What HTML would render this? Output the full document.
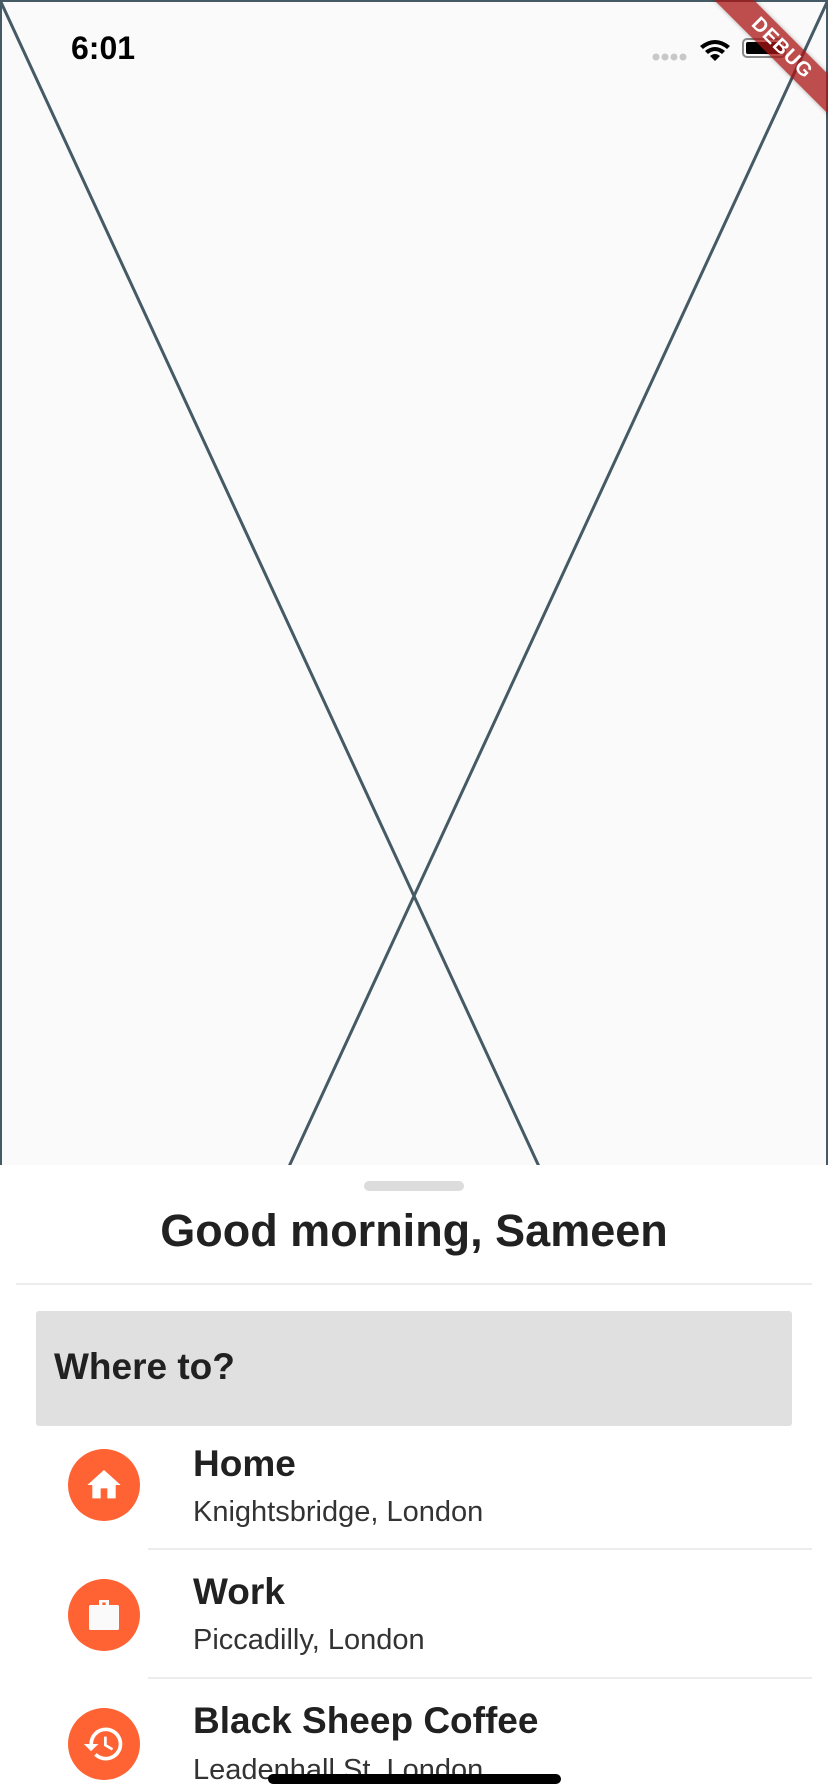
<!DOCTYPE html>
<html><head><meta charset="utf-8"><style>
*{margin:0;padding:0;box-sizing:border-box}
body{width:828px;height:1792px;overflow:hidden;background:#fafafa;font-family:"Liberation Sans",sans-serif;position:relative}
.abs{position:absolute}
.sheet{position:absolute;left:0;top:1165px;width:828px;height:627px;background:#fff}
.t{position:absolute;white-space:nowrap;color:#212121}
.circle{position:absolute;left:68px;width:72px;height:72px;border-radius:50%;background:#ff6333}
.div{position:absolute;height:2px;background:#ececec}
</style></head><body>
<svg class="abs" style="left:0;top:0" width="828" height="1792">
<rect x="1" y="1" width="826" height="1790" fill="none" stroke="#455a64" stroke-width="2"/>
<line x1="0" y1="0" x2="828" y2="1792" stroke="#455a64" stroke-width="3"/>
<line x1="828" y1="0" x2="0" y2="1792" stroke="#455a64" stroke-width="3"/>
</svg>
<div class="t" style="left:71px;top:30px;font-size:32px;font-weight:bold;color:#000">6:01</div>
<svg class="abs" style="left:650px;top:36px" width="150" height="30">
<circle cx="6" cy="21" r="3.5" fill="#c8c8c8"/><circle cx="15" cy="21" r="3.5" fill="#c8c8c8"/><circle cx="24" cy="21" r="3.5" fill="#c8c8c8"/><circle cx="33" cy="21" r="3.5" fill="#c8c8c8"/>
<path d="M50 10 Q65 -2 80 10 L77 13 Q65 3 53 13Z M55 15 Q65 7 75 15 L72 18 Q65 12 58 18Z M60 20 Q65 16 70 20 L65 25Z" fill="#000"/>
<rect x="93" y="3" width="42" height="18" rx="4" fill="none" stroke="#888" stroke-width="2"/>
<rect x="96" y="6" width="36" height="12" rx="2" fill="#000"/>
</svg>
<div class="abs" style="left:682px;top:34px;width:200px;height:28px;background:rgba(170,20,20,0.75);transform:rotate(45deg);color:#fff;font-weight:bold;font-size:20px;text-align:center;line-height:28px;letter-spacing:1px;box-shadow:0 0 4px rgba(0,0,0,0.3)">DEBUG</div>
<div class="sheet"></div>
<div class="abs" style="left:364px;top:1181px;width:100px;height:10px;border-radius:5px;background:#dcdcdc"></div>
<div class="t" style="left:0;width:828px;text-align:center;top:1205px;font-size:45px;font-weight:bold">Good morning, Sameen</div>
<div class="div" style="left:16px;width:796px;top:1283px"></div>
<div class="abs" style="left:36px;top:1311px;width:756px;height:115px;background:#e0e0e0;border-radius:3px"></div>
<div class="t" style="left:54px;top:1346px;font-size:37px;font-weight:bold">Where to?</div>

<div class="circle" style="top:1449px"></div>
<svg class="abs" style="left:84px;top:1465px" width="40" height="40" viewBox="0 0 24 24"><path d="M10 20v-6h4v6h5v-8h3L12 3 2 12h3v8z" fill="#fff"/></svg>
<div class="t" style="left:193px;top:1443px;font-size:37px;font-weight:bold">Home</div>
<div class="t" style="left:193px;top:1496px;font-size:29px;color:#333">Knightsbridge, London</div>
<div class="div" style="left:148px;width:664px;top:1548px"></div>

<div class="circle" style="top:1579px"></div>
<svg class="abs" style="left:84px;top:1595px" width="40" height="40" viewBox="0 0 24 24"><path d="M9 3h6v3h5a1 1 0 0 1 1 1v13a1 1 0 0 1-1 1H4a1 1 0 0 1-1-1V7a1 1 0 0 1 1-1h5zM11 4.5v1.5h2V4.5z" fill="#fafafa"/></svg>
<div class="t" style="left:193px;top:1571px;font-size:37px;font-weight:bold">Work</div>
<div class="t" style="left:193px;top:1624px;font-size:29px;color:#333">Piccadilly, London</div>
<div class="div" style="left:148px;width:664px;top:1677px"></div>

<div class="circle" style="top:1708px"></div>
<svg class="abs" style="left:82px;top:1722px" width="44" height="44" viewBox="0 0 24 24"><path d="M13 3a9 9 0 0 0-9 9H1l3.9 3.9L9 12H6a7 7 0 1 1 2.05 4.95l-1.42 1.42A9 9 0 1 0 13 3zm-1 5v5l4.28 2.54.72-1.21-3.5-2.08V8z" fill="#fff"/></svg>
<div class="t" style="left:193px;top:1700px;font-size:37px;font-weight:bold">Black Sheep Coffee</div>
<div class="t" style="left:193px;top:1754px;font-size:29px;color:#333">Leadenhall St, London</div>
<div class="abs" style="left:268px;top:1774px;width:293px;height:10px;border-radius:5px;background:#000"></div>
</body></html>
